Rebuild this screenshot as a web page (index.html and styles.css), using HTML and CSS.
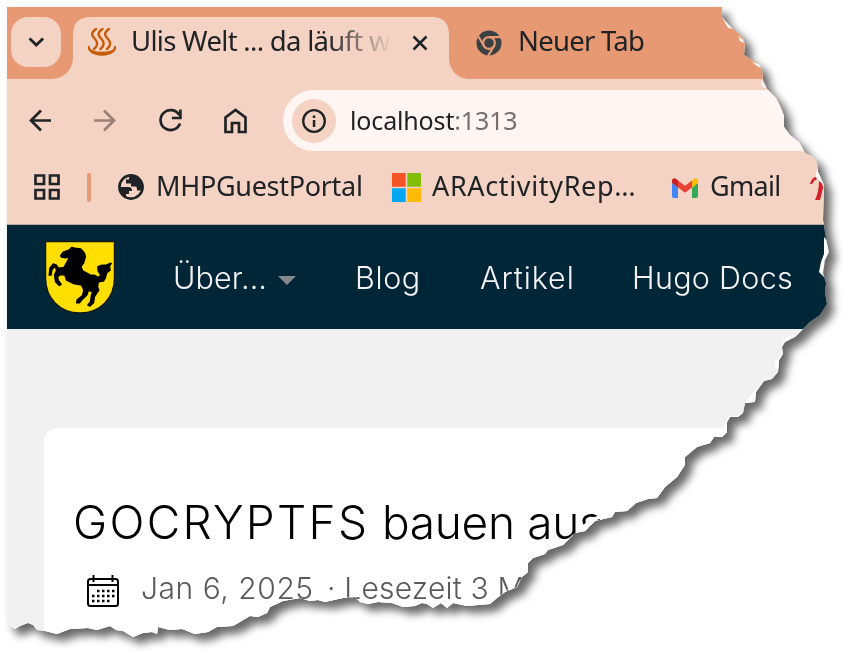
FILE: index.html
```html
<!DOCTYPE html>
<html lang="de">
<head>
<meta charset="utf-8">
<title>Ulis Welt</title>
<link rel="stylesheet" href="styles.css">
</head>
<body>
<div class="shadow">
<div class="paper">
  <div class="tabstrip">
    <div class="tab-search"><svg width="50" height="50" viewBox="0 0 50 50" fill="none" stroke="#1f2326" stroke-width="2.8"><path d="M18.500 21.500l6.800 6.600 6.800-6.600"/></svg></div>
    <div class="tab-active">
      <svg class="flare" width="420" height="72" viewBox="0 0 420 72"><path fill="#f5d3c4" d="M0 72C14 72 23 63 23 50V28Q23 10 41 10H382Q399 10 399 28V50C399 63 407 72 420 72Z"/></svg>
      <svg class="favicon" width="30" height="32" viewBox="0 0 30 32" fill="none" stroke="#c75b05" stroke-width="2.400" stroke-linecap="round"><path d="M9 2C3 6 5 9 8 12s3 7-1 10M15.500 2c-6 4-4 7-1 10s3 7-1 10M22 2c-6 4-4 7-1 10s3 7-1 10"/><path d="M2 19c-2 4 3 9 13 9s15-5 13-9c0 5-6 6.500-13 6.500S2 24 2 19z" stroke-width="1.300" fill="#c75b05"/></svg>
      <span class="tab-title fade">Ulis Welt ... da läuft w</span>
      <svg class="close" width="18" height="18" viewBox="0 0 18 18" fill="none" stroke="#202326" stroke-width="2.500"><path d="M2.500 2.500l13 13M15.500 2.500l-13 13"/></svg>
    </div>
    <div class="tab-idle">
      <svg width="26" height="26" viewBox="0 0 26 26"><circle cx="13" cy="13" r="12.500" fill="#3c4043"/><circle cx="13" cy="13" r="5.900" fill="none" stroke="#e69973" stroke-width="2.200"/><path d="M13 7.200H25M8 16L2.300 6.300M18 16l-6 10" fill="none" stroke="#e69973" stroke-width="2.200"/></svg>
      <span class="tab-title new">Neuer Tab</span>
    </div>
  </div>
  <div class="toolbar">
    <svg class="navicons" width="250" height="40" viewBox="0 0 250 40" fill="none" stroke="#202326" stroke-width="2.700">
      <path d="M44 20.500H24.500M34 10.500l-10 10 10 10"/>
      <path d="M87 20.500h20M97 10.500l10 10-10 10" stroke="#9b817a"/>
      <path d="M172.200 15A10 10 0 1 0 173 23.500"/><path d="M173.400 9.500v8.500h-8.500"/>
      <path d="M218.500 32V17.500L228.500 10l10 7.500V32h-6.500v-9h-7v9z"/>
    </svg>
    <div class="omnibox">
      <div class="info"><svg width="26" height="26" viewBox="0 0 26 26"><circle cx="13" cy="13" r="10.800" fill="none" stroke="#202326" stroke-width="2.300"/><path d="M11.800 12h2.500v7h-2.500zM11.800 7.500h2.500V10h-2.500z" fill="#202326"/></svg></div>
      <span class="url">localhost<span>:1313</span></span>
    </div>
  </div>
  <div class="bookmarks">
    <svg class="apps" width="28" height="28" viewBox="0 0 28 28" fill="none" stroke="#202326" stroke-width="2.700"><path d="M2.500 2.500h8.500v8.500H2.500zM17 2.500h8.500v8.500H17zM2.500 17h8.500v8.500H2.500zM17 17h8.500v8.500H17z"/></svg>
    <i class="divider"></i>
    <svg class="globe" width="26" height="26" viewBox="0 0 26 26"><circle cx="13" cy="13" r="11.600" fill="#f5d3c4" stroke="#202326" stroke-width="2.600"/><path fill="#202326" d="M1 13h9c3 0 4 1 4 4h-3v3H8v4C3 22 1 18 1 13zM13 1.500c-2 1-2 3-2 4H8v4h5v3h4c2 0 2 2 2 4h5c3-7-1-15-11-15z"/></svg>
    <span class="bm mhp">MHPGuestPortal</span>
    <svg class="ms" width="29" height="29" viewBox="0 0 29 29"><path fill="#f35325" d="M0 0h13.700v13.700H0z"/><path fill="#81bc06" d="M15.300 0H29v13.700H15.300z"/><path fill="#05a6f0" d="M0 15.300h13.700V29H0z"/><path fill="#ffba08" d="M15.300 15.300H29V29H15.300z"/></svg>
    <span class="bm ar">ARActivityRep…</span>
    <svg class="gm" width="26" height="20" viewBox="0 0 26 20"><path fill="#4285f4" d="M0 5l6 4.500V20H2q-2 0-2-2z"/><path fill="#34a853" d="M26 5l-6 4.500V20h4q2 0 2-2z"/><path fill="#ea4335" d="M6 2.500l7 5.300 7-5.300v7l-7 5.300-7-5.300z"/><path fill="#c5221f" d="M0 3C0 0 3-1 6 2.500v7L0 5z"/><path fill="#fbbc04" d="M26 3c0-3-3-4-6-.500v7L26 5z"/></svg>
    <span class="bm gmail">Gmail</span>
    <svg class="red" width="14" height="26" viewBox="0 0 14 26"><path d="M0 9Q2 2 6 2l1 2Q4 5 2 9zM9 6q4 2 4 7l-3 12H5q4-8 4-19z" fill="#d5202c"/></svg>
  </div>
  <nav class="sitenav">
    <svg class="crest" width="72" height="75" viewBox="0 0 72 75"><path fill="#ffdf00" stroke="#15191a" stroke-width="1.500" d="M1.500 1.500h69V38c0 20-14 35-34.500 35S1.500 58 1.500 38z"/><path fill="#000" stroke="#000" stroke-width="5" stroke-linejoin="round" transform="translate(-4 -5) scale(.3333)" d="M62 62L70 52 88 45 95 38 105 40 122 42 133 55 136 65 130 85 122 95 128 108 150 120 165 122 175 128 183 120 175 108 174 95 182 92 200 90 213 85 208 95 210 105 200 113 195 130 190 138 175 140 172 155 176 165 163 185 160 203 150 213 144 210 152 200 155 180 158 170 145 165 140 180 125 195 118 203 110 203 112 195 128 182 132 165 125 150 100 145 80 135 75 120 62 118 52 125 55 137 63 148 58 151 47 140 44 120 50 108 48 98 42 95 35 105 33 120 28 120 30 100 40 87 48 90 55 100 72 98 85 75 88 66 75 68 65 66z"/></svg>
    <span class="site-link l1">Über...</span><i class="caret"></i>
    <span class="site-link l2">Blog</span>
    <span class="site-link l3">Artikel</span>
    <span class="site-link l4">Hugo Docs</span>
  </nav>
  <main class="content">
    <article class="card">
      <h1><span class="caps">GOCRYPTFS</span> bauen aus</h1>
      <div class="meta">
        <svg width="34" height="34" viewBox="0 0 34 34" fill="none" stroke="#000" stroke-width="2"><rect x="2" y="5" width="30" height="27" rx="2.500"/><path d="M2 11h30M7.500 1v7M26.500 1v7"/><path stroke-width="2.500" stroke-dasharray="2.500 2.500" d="M11 17h18M6 22h23M6 27h18"/></svg>
        <span class="date">Jan 6, 2025</span><span class="read">· Lesezeit 3 M</span>
      </div>
    </article>
  </main>
  <svg class="chips" width="844" height="651" viewBox="7 7 844 651" fill="#fff"><path d="M722 17l6 11 5 1-7-8zM738 36l5 4 1 3-4-2zM752 62l7 2 2 4-4-2zM761 80l6 9-5-3zM799 141l6 12-4-4zM817 168l7 17-5-5-3-3zM824 237l6 7v16l-6 17-5-5 2-10 3-8zM802 329l-19 14-1 3 1-6 14-7zM782 350l0 6-4 14-3-3 0-6 4-3zM765 380l-9 12-1 10-10 1 9-12zM739 416l-10 0-6 13-5 0v10h11zM614 512l-19 9-9 10-9 1 13-14zM516 587l-11 4-9 9 14-13z"/></svg>
</div>
</div>
</body>
</html>
```
FILE: styles.css
```css
* { box-sizing: border-box; }
body { margin: 0; width: 851px; height: 658px; overflow: hidden; background: #fff; font-family: "Noto Sans", sans-serif; color: #202326; }
svg { display: block; flex: none; }
span { white-space: nowrap; }
.shadow { filter: drop-shadow(7px 7px 4px rgba(0,0,0,.58)) drop-shadow(0 0 5px rgba(0,0,0,.04)); }
.paper {
  width: 851px; height: 658px; padding: 7px 0 0 7px; background: #fff; position: relative;
  clip-path: polygon(7px 7px,722px 7px,722px 17px,726px 22px,732px 28px,738px 33px,743px 38px,745px 44px,744px 55px,752px 60px,759px 64px,762px 70px,763px 80px,767px 89px,776px 98px,781px 108px,784px 116px,784px 127px,790px 135px,799px 142px,805px 153px,813px 157px,817px 162px,818px 172px,824px 185px,823px 220px,825px 232px,826px 238px,829px 252px,825px 260px,823px 273px,826px 283px,825px 293px,827px 304px,820px 315px,810px 322px,802px 330px,795px 337px,785px 342px,782px 347px,783px 354px,779px 360px,778px 372px,772px 379px,764px 381px,756px 392px,755px 402px,745px 403px,743px 413px,738px 417px,730px 417px,727px 422px,727px 432px,722px 437px,714px 437px,710px 443px,697px 447px,685px 457px,685px 465px,677px 477px,665px 487px,657px 498px,648px 499px,636px 503px,627px 511px,615px 512px,612px 517px,595px 521px,585px 531px,575px 533px,563px 545px,548px 550px,545px 554px,533px 558px,528px 563px,528px 572px,522px 577px,517px 587px,505px 592px,497px 598px,490px 604px,467px 606px,453px 603px,447px 608px,441px 603px,433px 608px,427px 604px,422px 603px,415px 606px,403px 607px,392px 603px,378px 602px,368px 604px,360px 602px,355px 597px,343px 598px,325px 602px,318px 600px,310px 601px,300px 598px,283px 601px,270px 607px,267px 613px,258px 617px,250px 616px,233px 626px,217px 627px,208px 632px,195px 634px,182px 629px,170px 630px,158px 627px,157px 634px,152px 632px,143px 633px,133px 637px,123px 631px,116px 630px,110px 626px,97px 630px,88px 628px,70px 629px,57px 634px,45px 631px,37px 630px,33px 625px,28px 623px,20px 626px,15px 629px,7px 624px);
}
.tabstrip { height: 72px; background: #e69973; display: flex; }
.tab-search { margin: 10px 0 0 4px; width: 50px; height: 50px; border-radius: 17px; background: #f5d3c4; flex: none; }
.tab-active { position: relative; width: 376px; margin-left: 12px; flex: none; display: flex; padding-left: 14px; }
.flare { position: absolute; left: -23px; top: 0; }
.favicon { position: relative; margin-top: 20px; }
.tab-title { position: relative; font-size: 27.500px; line-height: 36px; height: 36px; margin-top: 16px; }
.fade { margin-left: 14px; width: 262px; letter-spacing: -.7px; -webkit-mask-image: linear-gradient(90deg,#000 195px,transparent 262px); mask-image: linear-gradient(90deg,#000 195px,transparent 262px); }
.close { position: relative; margin: 27px 0 0 18px; }
.tab-idle { display: flex; margin-left: 27px; }
.tab-idle svg { margin-top: 23px; }
.new { margin-left: 16px; letter-spacing: -.75px; }
.toolbar { height: 83px; background: #f5d3c4; display: flex; padding-top: 11px; }
.navicons { margin-top: 10px; width: 250px; }
.omnibox { margin-left: 26px; height: 61px; flex: 1; border-radius: 31px 0 0 31px; background: #fff5f2; display: flex; align-items: center; padding-left: 9px; }
.info { width: 44px; height: 44px; border-radius: 50%; background: #f5d3c4; display: grid; place-items: center; flex: none; }
.url { margin: -2px 0 0 14px; font-size: 25px; letter-spacing: -.15px; }
.url span { color: #756f6e; }
.bookmarks { height: 63px; background: #f5d3c4; border-bottom: 1px solid #b9a8a1; display: flex; align-items: flex-start; }
.apps { margin: 11px 0 0 26px; }
.divider { width: 4px; height: 29px; border-radius: 2px; background: #e69973; margin: 11px 0 0 26px; flex: none; }
.globe { margin: 12px 0 0 27px; }
.bm { font-size: 27px; line-height: 36px; margin-top: 6px; flex: none; }
.mhp { margin-left: 12px; width: 208px; letter-spacing: -.3px; }
.ms { margin: 11px 0 0 28px; }
.ar { margin-left: 11px; width: 206px; letter-spacing: .65px; }
.gm { margin: 16px 0 0 34px; }
.gmail { margin-left: 12px; width: 71px; letter-spacing: -.7px; }
.red { margin: 13px 0 0 29px; }
.sitenav { height: 104px; background: #002638; display: flex; color: #f3f3f3; font-family: Inter, sans-serif; font-weight: 300; }
.crest { margin: 15px 0 0 37px; }
.site-link { font-size: 30.500px; line-height: 40px; margin-top: 33px; flex: none; }
.l1 { margin-left: 57px; width: 95px; letter-spacing: .1px; }
.caret { width: 0; height: 0; border: 9px solid transparent; border-top-color: #85888e; border-bottom: 0; margin: 51px 0 0 10px; flex: none; }
.l2 { margin-left: 59px; width: 66px; letter-spacing: .6px; }
.l3 { margin-left: 59px; width: 96px; letter-spacing: .9px; }
.l4 { margin-left: 56px; letter-spacing: .3px; }
.content { height: 329px; background: #f1f1f1; padding: 99px 0 0 37px; font-family: Inter, sans-serif; }
.card { height: 230px; background: #fff; border-radius: 14px 0 0 0; padding: 65px 0 0 29px; }
h1 { margin: 0; color: #000; font-size: 46px; line-height: 58px; height: 58px; font-weight: 300; white-space: nowrap; letter-spacing: -.3px; }
.caps { letter-spacing: 2.300px; }
.meta { display: flex; margin: 22px 0 0 13px; color: #5a5a5a; font-size: 30px; font-weight: 300; line-height: 34px; }
.meta svg { margin-top: 1px; }
.meta span { margin-top: -2px; }
.date { margin-left: 21px; width: 172px; flex: none; letter-spacing: .55px; }
.read { margin-left: 14px; letter-spacing: .2px; }
.chips { position: absolute; left: 7px; top: 7px; }
```
